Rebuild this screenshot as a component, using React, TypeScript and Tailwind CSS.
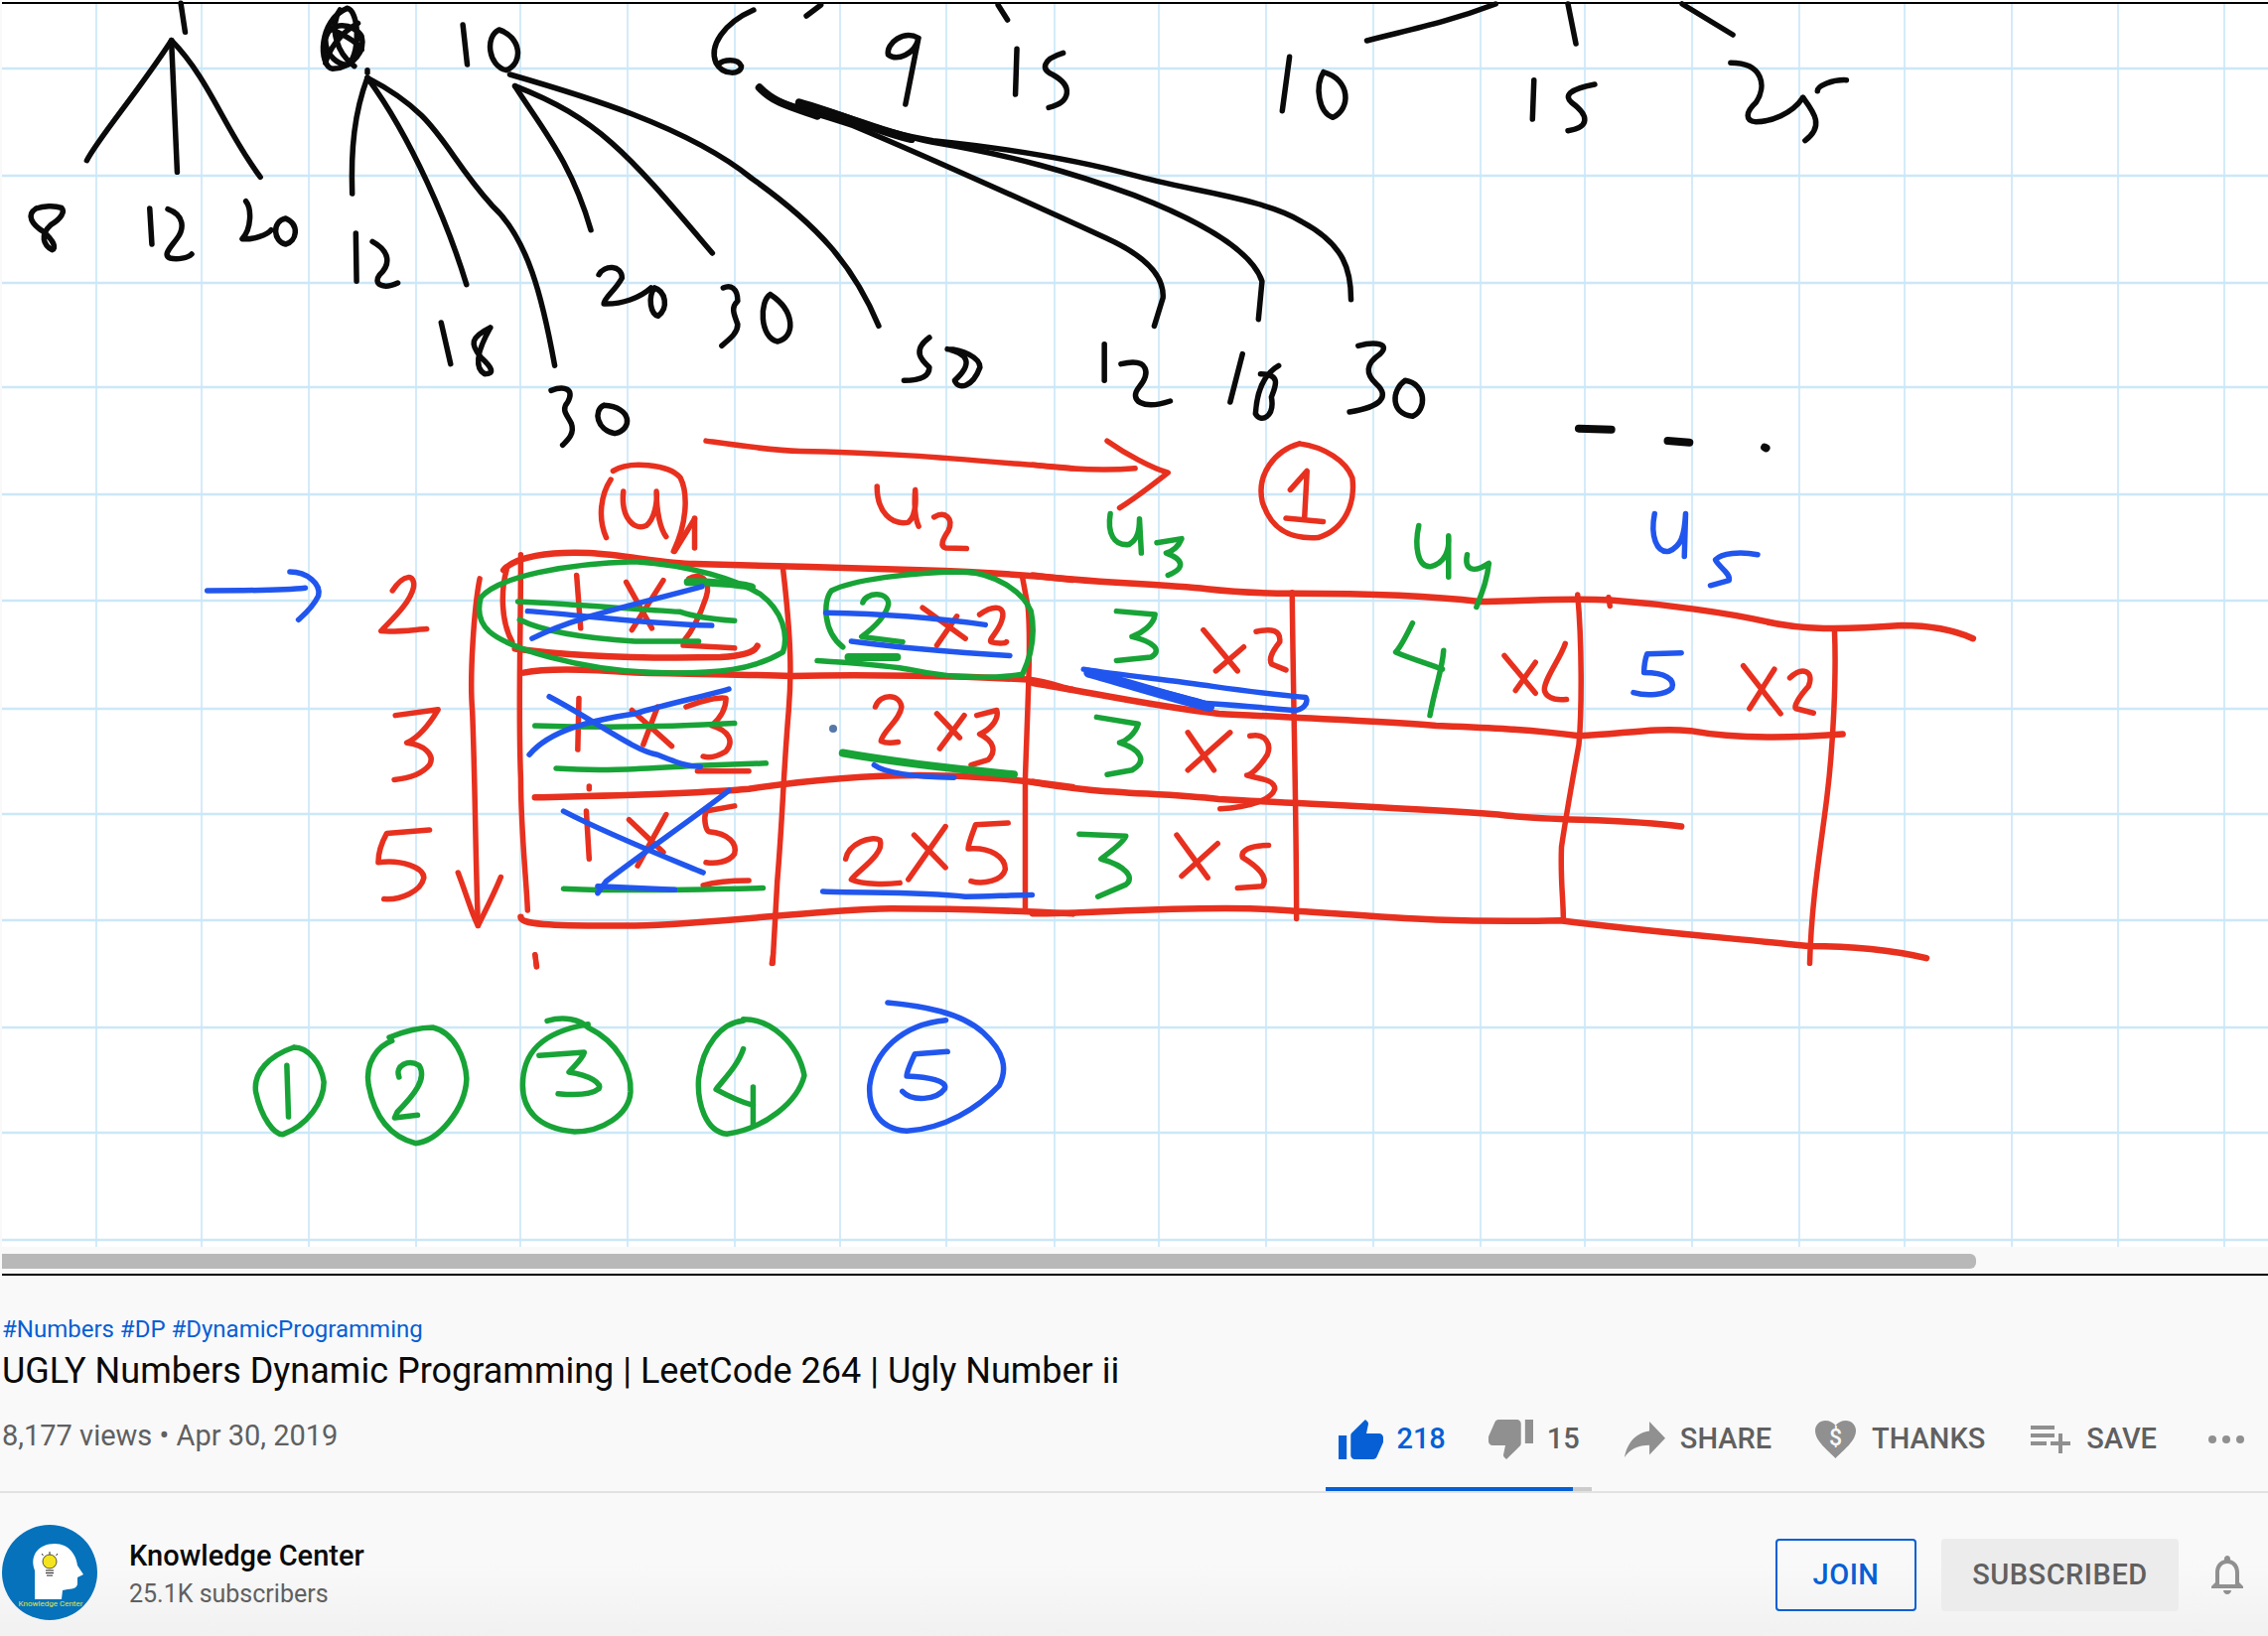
import { FC } from "react";

const RED = "#e8301f";
const GREEN = "#18a337";
const BLUE = "#2156ee";
const BLACK = "#0a0a0a";

const vGrid = [97, 203, 311, 419, 524, 632, 740, 846, 953, 1062, 1167, 1275, 1383, 1491, 1596, 1704, 1812, 1918, 2026, 2133, 2240];
const hGrid = [69, 177, 285, 390, 498, 605, 714, 820, 927, 1035, 1141, 1249];

interface InkProps {
  ox: number;
  oy: number;
  sx: number;
  sy: number;
  color: string;
  width: number;
  lines: string[];
}

// strokes are noted in crop coordinates, the group maps them back on the board
const Ink: FC<InkProps> = ({ ox, oy, sx, sy, color, width, lines }) => (
  <g transform={`translate(${ox} ${oy}) scale(${1 / sx} ${1 / sy})`}>
    {lines.map((d, i) => (
      <path
        key={i}
        d={d}
        fill="none"
        stroke={color}
        strokeWidth={width}
        strokeLinecap="round"
        strokeLinejoin="round"
        vectorEffect="non-scaling-stroke"
      />
    ))}
  </g>
);

const topLeft = { ox: 0, oy: 0, sx: 1.373, sy: 3 };
const topRight = { ox: 1142, oy: 0, sx: 1.373, sy: 3 };
const midLeft = { ox: 180, oy: 440, sx: 1.742, sy: 2.904 };
const midRight = { ox: 1040, oy: 440, sx: 1.6, sy: 2.904 };
const bottom = { ox: 200, oy: 960, sx: 1.823, sy: 3 };

const blackLeft = [
  "M250 10 L256 97",
  "M120 485 C135 420 190 280 237 122",
  "M237 122 L245 520",
  "M237 122 C290 240 310 390 360 535",
  "M480 25 C440 60 440 200 460 208 C490 205 505 150 500 110 C490 70 455 60 450 120 C450 170 470 200 482 195 C500 150 495 30 480 25",
  "M470 30 C455 80 465 160 490 200 M495 70 C470 100 455 150 450 190 M460 90 C480 110 495 130 500 150",
  "M640 75 L646 195",
  "M690 90 C670 110 675 200 700 212 C725 190 720 110 690 90",
  "M508 212 L508 220",
  "M705 225 C800 285 950 380 1040 540 C1130 680 1180 800 1215 985",
  "M712 260 C750 390 790 490 817 695",
  "M712 260 C830 360 870 470 985 765",
  "M508 235 C490 340 485 450 487 585",
  "M508 235 C570 420 620 680 645 860",
  "M508 235 C610 350 610 450 680 620 C730 720 750 900 767 1105",
  "M1042 30 C1000 70 980 140 990 190 C1000 230 1025 225 1025 200 C1020 175 1000 180 993 195",
  "M1135 15 L1115 48",
  "M1380 15 L1393 60",
  "M1270 115 C1250 90 1225 130 1228 165 C1240 185 1265 165 1270 115 L1252 315",
  "M1406 148 L1404 285",
  "M1470 160 C1440 180 1440 210 1455 225 C1485 260 1480 310 1450 325",
  "M1050 265 C1070 310 1110 330 1180 380 C1300 490 1420 610 1530 720 C1580 770 1610 830 1608 900 L1596 985",
  "M1105 310 C1180 350 1220 400 1290 430 C1400 470 1480 520 1568 590 C1650 660 1730 750 1745 850 L1740 965",
  "M1105 310 C1200 375 1240 410 1290 425 C1400 450 1500 490 1568 530 C1640 575 1750 600 1800 670 C1860 740 1868 820 1868 905",
  "M50 630 C35 650 45 680 60 700 C75 730 78 750 72 755 C60 740 55 710 70 680 C85 660 90 640 85 628 C75 620 60 622 50 630",
  "M207 630 L210 738",
  "M232 632 C255 650 255 690 245 720 C235 750 225 770 235 780 C245 785 260 780 265 768",
  "M340 608 C348 630 348 690 335 722 C350 725 370 710 375 695",
  "M395 660 C375 670 378 730 395 738 C410 730 415 680 395 660",
  "M492 705 L493 850",
  "M515 730 C540 760 540 800 525 830 C515 860 530 875 550 855",
  "M610 975 L623 1100",
  "M678 990 C650 1020 650 1040 665 1080 C680 1110 685 1130 670 1130 C655 1110 660 1060 678 990",
  "M762 1180 C780 1165 795 1175 785 1215 C775 1240 785 1255 790 1280 C795 1310 785 1330 778 1345",
  "M835 1225 C820 1240 825 1300 850 1310 C875 1300 875 1230 835 1225",
  "M828 830 C835 800 860 800 860 840 C850 880 835 900 835 918 C860 920 885 900 900 870",
  "M905 870 C895 900 900 950 910 955 C925 930 920 880 905 870",
  "M1000 870 C1010 860 1020 870 1020 910 C1010 930 1015 950 1020 980 C1020 1010 1005 1030 998 1045",
  "M1065 890 C1050 910 1050 1020 1075 1032 C1100 1020 1100 940 1065 890",
  "M1285 1020 C1260 1060 1275 1090 1285 1110 C1285 1140 1270 1150 1250 1150",
  "M1310 1055 C1340 1070 1345 1100 1320 1150 C1325 1180 1345 1170 1355 1110 C1355 1080 1330 1055 1310 1055",
  "M1527 1040 L1527 1150",
  "M1550 1100 C1590 1080 1590 1130 1575 1170 C1560 1210 1580 1240 1618 1212",
];

const blackRight = [
  "M322 123 C380 90 430 70 500 12",
  "M600 12 L611 132",
  "M758 12 L828 105",
  "M215 172 L205 335",
  "M262 218 C250 260 255 340 275 355 C300 330 300 240 262 218",
  "M553 242 L551 360",
  "M637 255 C600 270 595 290 605 310 C630 350 630 385 600 395",
  "M825 190 C870 190 875 260 860 310 C845 340 845 365 860 368 C880 368 910 345 925 295",
  "M985 242 C965 240 945 260 945 275",
  "M925 295 C940 340 955 380 928 425",
  "M150 1070 L133 1215",
  "M200 1105 C180 1130 170 1180 168 1250 C175 1280 195 1260 190 1200 C195 1170 205 1130 175 1130",
  "M310 1045 C335 1030 355 1040 340 1070 C320 1100 320 1130 335 1160 C355 1200 340 1230 298 1245",
  "M375 1150 C355 1180 355 1250 385 1258 C405 1240 405 1160 375 1150",
];

const blackThick = [
  "M1050 265 C1070 310 1090 320 1130 350",
  "M1105 310 C1170 350 1210 395 1260 420",
];

const dashes = ["M615 1295 L660 1298", "M738 1332 L768 1337", "M872 1352 L874 1354"];

const redLeft = [
  "M925 12 C980 25 1040 40 1090 42 C1250 45 1400 70 1568 92",
  "M758 125 C740 170 735 240 750 295",
  "M780 160 C775 240 800 275 820 260 C835 240 840 190 838 160 C838 220 845 270 855 292",
  "M762 100 C790 70 860 80 880 120 C895 170 890 260 868 335",
  "M905 238 L905 325",
  "M870 335 L905 240",
  "M1225 145 C1225 220 1250 260 1280 250 C1295 230 1293 180 1292 155 C1290 200 1292 240 1298 262",
  "M1325 235 C1345 215 1360 240 1350 275 C1340 300 1335 320 1345 325 L1382 327",
  "M375 450 C395 400 415 400 412 440 C405 490 370 540 355 568 C380 572 410 565 435 562",
  "M380 815 L455 798 C440 840 420 880 400 895 C430 900 450 930 440 960 C425 990 400 1000 378 1003",
  "M440 1150 L365 1160 C355 1190 350 1220 350 1245 C390 1235 430 1260 430 1290 C425 1330 390 1355 360 1352",
  "M528 415 C518 500 510 700 515 800 C520 1000 520 1200 525 1430",
  "M490 1275 C505 1340 515 1400 525 1430 C540 1380 555 1330 565 1288",
  "M600 345 C600 600 595 800 600 1000 C600 1150 610 1300 612 1385",
  "M575 390 C565 450 565 540 585 600",
  "M885 610 L975 618",
  "M895 415 C915 395 935 420 925 470 C915 520 900 570 885 600",
  "M698 405 L705 560",
  "M785 425 L830 560",
  "M850 420 L795 565",
  "M1060 385 C1075 600 1075 700 1070 800 C1060 1000 1060 1100 1050 1300 L1042 1540",
  "M1480 410 L1490 500 C1495 600 1490 750 1485 1000 L1485 1380",
  "M625 1515 L628 1550",
  "M702 765 L700 915",
  "M795 800 L865 905",
  "M840 790 L815 900",
  "M890 790 C920 770 950 760 960 765 C960 800 945 830 935 845 C965 860 975 890 960 920 C945 935 930 940 920 935",
  "M910 978 L1000 978",
  "M720 1022 L720 1030",
  "M715 1095 L720 1235",
  "M790 1120 L850 1215",
  "M855 1105 L805 1255",
  "M975 1080 L925 1095 C920 1120 925 1150 930 1155 C965 1160 980 1190 975 1220 C965 1245 940 1250 925 1245",
  "M920 1312 C945 1300 975 1298 1000 1298",
  "M1305 500 L1380 590",
  "M1365 525 L1330 610",
  "M1405 520 C1430 490 1450 495 1445 530 C1440 570 1420 590 1425 600 C1435 605 1450 605 1452 600",
  "M1222 790 C1230 750 1265 750 1268 790 C1265 830 1235 860 1232 890 C1240 897 1255 895 1262 893",
  "M1330 810 L1370 880",
  "M1378 815 L1335 912",
  "M1400 815 L1435 800 C1440 830 1420 860 1405 870 C1430 890 1435 920 1420 945 L1390 960",
  "M1170 1235 C1175 1190 1215 1165 1230 1180 C1240 1220 1190 1270 1180 1295 C1200 1310 1240 1310 1265 1305",
  "M1290 1165 L1345 1260",
  "M1345 1140 L1280 1295",
  "M1455 1130 L1398 1135 C1390 1170 1385 1190 1385 1205 C1425 1200 1450 1230 1450 1265 C1445 1300 1410 1310 1390 1300",
];

// the ruled rows of the table are heavier than the columns and the writing
const redRowsLeft = [
  "M570 390 C590 350 650 335 720 340 C780 345 850 370 905 372 C1000 375 1200 385 1300 390 C1400 395 1500 405 1568 418",
  "M590 620 C680 640 800 650 950 645 C990 640 1010 630 1015 612",
  "M605 690 C650 675 720 680 800 690 C900 695 1000 695 1075 700 C1200 695 1380 700 1490 710 C1530 720 1550 735 1568 740",
  "M625 1055 C750 1050 900 1045 1000 1030 C1100 1005 1200 990 1300 990 C1400 990 1480 1005 1568 1025",
  "M600 1405 C600 1425 640 1432 800 1430 C950 1425 1100 1385 1250 1380 C1350 1380 1450 1385 1568 1395",
];

const redRowsRight = [
  "M0 405 C80 425 200 430 280 445 C330 455 380 458 420 458 C500 458 620 460 720 482 C790 482 860 470 930 478 C1020 490 1120 515 1180 540 C1240 565 1300 565 1400 552 C1450 552 1490 570 1515 590",
  "M0 720 C100 750 200 790 300 810 C400 820 550 830 650 845 C720 850 800 855 880 875 C950 870 1000 850 1060 860 C1120 880 1200 885 1305 870",
  "M0 1010 C100 1045 200 1040 300 1060 C450 1075 600 1085 750 1105 C830 1125 950 1115 1045 1140",
  "M0 1395 C100 1395 200 1375 350 1380 C500 1390 620 1425 850 1415 C1000 1450 1150 1470 1250 1490 C1320 1490 1380 1500 1440 1525",
];

const redRight = [
  "M0 82 C60 95 120 100 165 92",
  "M120 12 C150 50 190 90 218 105 C190 145 165 180 140 208",
  "M430 20 C390 40 360 110 370 190 C385 280 420 300 460 295 C505 270 520 190 515 120 C505 70 470 30 430 20",
  "M415 155 L442 100 L438 235",
  "M408 238 L468 248",
  "M418 455 C420 800 425 1100 425 1410",
  "M878 462 C885 600 885 800 880 900 C870 1000 860 1100 852 1200 C850 1300 855 1350 855 1415",
  "M1292 570 C1295 700 1290 900 1280 1050 C1270 1200 1255 1350 1252 1540",
  "M928 470 L930 495",
  "M275 565 L330 685",
  "M340 615 L295 685",
  "M360 570 C385 560 400 565 398 600 C385 630 380 650 385 665 L408 682",
  "M760 640 L810 750",
  "M810 660 L778 742",
  "M858 605 C850 650 820 720 825 745 C830 770 850 770 860 768",
  "M1145 670 L1205 810",
  "M1195 680 L1155 795",
  "M1220 705 C1240 670 1260 685 1250 730 C1235 760 1225 790 1230 795 L1258 808",
  "M250 865 L292 975",
  "M318 865 L250 975",
  "M350 875 C375 865 385 900 378 930 C365 970 350 990 345 990 C360 1000 390 1000 390 1030 C385 1060 350 1085 302 1088",
  "M232 1165 L282 1290",
  "M298 1190 L240 1285",
  "M380 1195 C350 1195 335 1210 338 1230 C365 1260 380 1290 370 1315 L330 1320",
];

const greenLeft = [
  "M530 470 C560 410 680 370 800 365 C900 375 980 420 1020 460 C1060 510 1070 580 1060 630 C1010 680 950 695 830 690 C700 680 580 620 545 570 C525 540 525 500 530 470",
  "M595 482 C700 490 800 505 880 512 C910 530 950 535 975 538",
  "M598 535 C640 570 720 590 800 598 L912 598",
  "M893 425 C930 425 990 430 1005 440",
  "M625 845 C720 850 850 850 975 838",
  "M662 970 C750 980 820 970 910 962 L1030 955",
  "M675 1322 C750 1330 900 1325 1025 1320",
  "M1165 615 C1130 570 1130 480 1145 450 C1180 420 1280 395 1380 395 C1430 400 1480 450 1495 510 C1505 590 1490 660 1480 695 C1420 710 1350 705 1280 680 C1220 665 1170 660 1120 655",
  "M1200 485 C1205 455 1245 450 1245 490 C1240 530 1210 570 1198 585 L1270 600",
];

const greenThick = [
  "M1175 645 L1260 645",
  "M1165 925 C1250 950 1350 970 1465 988",
  "M893 425 C930 425 990 430 1005 440",
];

const greenRight = [
  "M125 225 C120 280 130 320 155 315 C170 300 172 270 172 240 L175 340",
  "M200 310 L240 298 C235 320 225 335 215 340 C245 360 245 385 218 405",
  "M622 260 C615 320 620 380 640 380 C665 370 672 330 670 290 L670 410",
  "M700 345 C695 390 710 400 735 370 C732 420 725 450 715 498",
  "M135 510 L197 520 C195 550 175 575 160 585 C195 600 210 625 190 645 L135 655",
  "M612 545 C600 590 590 620 585 630 C610 650 640 665 660 680",
  "M662 625 C660 680 650 720 640 815",
  "M103 820 L170 840 C165 870 150 890 140 895 C175 915 185 950 160 975 L120 988",
  "M75 1162 L150 1168 C145 1190 120 1220 110 1235 C150 1255 165 1290 150 1310 L105 1345",
];

const greenBottom = [
  "M175 285 C130 310 100 360 105 420 C115 500 140 550 155 548 C200 520 230 450 230 390 C225 330 200 285 175 285",
  "M162 340 L165 495",
  "M350 255 C380 235 410 225 430 225 C470 240 490 320 492 380 C490 470 440 570 398 575 C340 550 320 470 312 400 C305 330 330 280 355 265",
  "M368 375 C360 340 385 320 405 340 C420 380 395 430 365 480 L360 498 L402 490",
  "M640 205 C670 190 700 200 715 225 C770 270 795 350 793 420 C790 490 740 540 690 540 C620 530 595 470 595 400 C595 300 630 240 715 215",
  "M625 310 L708 300 C705 320 690 340 680 360 C720 370 740 395 735 410 C720 430 690 430 660 425",
  "M1000 200 C1050 200 1100 270 1112 370 C1100 450 1040 530 970 547 C930 540 915 450 918 380 C925 280 960 210 1000 205",
  "M1000 290 C990 340 965 380 950 412 C970 430 995 450 1018 460",
  "M1018 405 L1018 520",
];

const blueLeft = [
  "M50 450 C100 450 180 450 222 442",
  "M195 395 C225 395 250 430 245 465 C235 500 220 520 210 535",
  "M612 510 C700 520 800 545 935 552",
  "M620 590 C690 530 780 500 918 438",
  "M1135 515 C1230 518 1330 530 1415 550",
  "M1180 598 C1280 620 1360 630 1458 640",
  "M650 760 C730 830 800 920 840 930 C870 950 890 965 915 965",
  "M615 930 C650 860 720 830 800 810 C860 780 920 760 965 738",
  "M675 1095 C750 1160 840 1220 920 1275",
  "M965 1035 C900 1120 820 1210 750 1300 L735 1335",
  "M735 1315 L870 1325",
  "M1220 960 C1240 985 1300 995 1360 997",
  "M1130 1330 C1200 1335 1300 1330 1380 1345 C1420 1345 1460 1340 1497 1340",
];

const blueRight = [
  "M82 680 C150 700 220 710 290 730 C350 745 390 755 440 762 C445 780 435 800 420 800 C360 790 320 785 280 780 C220 750 150 720 90 690",
  "M1002 225 C995 290 1005 340 1025 335 C1045 320 1050 290 1052 225 L1050 350",
  "M1168 345 C1140 335 1110 340 1100 360 C1105 380 1125 400 1122 420 L1092 435",
  "M1045 632 L990 635 C985 660 985 680 985 690 C1020 690 1035 710 1030 735 C1020 755 990 760 968 748",
];

const blueBottom = [
  "M1265 150 C1330 160 1400 180 1440 240 C1480 300 1485 350 1470 400 C1430 470 1370 530 1300 538 C1240 530 1230 450 1232 400 C1240 300 1290 215 1372 203",
  "M1375 298 L1315 305 C1305 340 1300 365 1300 372 C1340 375 1375 385 1370 410 C1355 445 1310 450 1292 418",
];

const Board = () => (
  <svg width="2284" height="1256" viewBox="0 0 2284 1256" className="block shrink-0">
    <rect x="2" y="0" width="2282" height="1256" fill="#ffffff" />
    <rect x="0" y="0" width="2" height="1256" fill="#f9f9f9" />
    {vGrid.map(x => (
      <line key={x} x1={x} y1="3" x2={x} y2="1256" stroke="#c4e5f7" strokeWidth="1.5" />
    ))}
    {hGrid.map(y => (
      <line key={y} x1="2" y1={y} x2="2284" y2={y} stroke="#cbe8f8" strokeWidth="2.5" />
    ))}
    <rect x="2" y="2" width="2282" height="2" fill="#000000" />
    <Ink {...topLeft} color={BLACK} width={5.5} lines={blackLeft} />
    <Ink {...topLeft} color={BLACK} width={8} lines={blackThick} />
    <Ink {...topRight} color={BLACK} width={5.5} lines={blackRight} />
    <Ink {...topRight} color={BLACK} width={8} lines={dashes} />
    <Ink {...midLeft} color={RED} width={5.5} lines={redLeft} />
    <Ink {...midRight} color={RED} width={5.5} lines={redRight} />
    <Ink {...midLeft} color={RED} width={6.5} lines={redRowsLeft} />
    <Ink {...midRight} color={RED} width={6.5} lines={redRowsRight} />
    <Ink {...midLeft} color={GREEN} width={5.5} lines={greenLeft} />
    <Ink {...midLeft} color={GREEN} width={8} lines={greenThick} />
    <Ink {...midRight} color={GREEN} width={5.5} lines={greenRight} />
    <Ink {...bottom} color={GREEN} width={5.5} lines={greenBottom} />
    <Ink {...bottom} color={RED} width={5} lines={["M618 5 L620 42", "M1055 0 L1052 32"]} />
    <Ink {...midLeft} color={BLUE} width={5.5} lines={blueLeft} />
    <Ink {...midRight} color={BLUE} width={5.5} lines={blueRight} />
    <Ink {...midRight} color={BLUE} width={10} lines={["M90 690 C150 720 220 760 285 790"]} />
    <Ink {...bottom} color={BLUE} width={5.5} lines={blueBottom} />
    <circle cx="839" cy="734" r="4" fill="#5777a8" />
  </svg>
);

const Avatar = () => (
  <svg width="96" height="96" viewBox="2 6 96 96" className="shrink-0">
    <circle cx="50" cy="54" r="48" fill="#0572bb" />
    <path
      d="M35 81 L35 52 C29 36 40 25 55 25 C70 25 77 37 78 47 L84 56 L78 59 L78 66 C76 72 70 70 63 72 L62 81 Z"
      fill="#ffffff"
    />
    <circle cx="50" cy="43" r="7" fill="#f4e420" stroke="#2b2b1a" strokeWidth="0.8" />
    <path d="M46 52 H54 M46 54.500 H54 M47 57 H53" stroke="#222222" strokeWidth="1.2" />
    <path d="M42 35 L43.500 37 M50 33 V36 M58 35 L56.500 37" stroke="#333333" strokeWidth="1" />
    <text
      x="51"
      y="88"
      textAnchor="middle"
      fontSize="8"
      fill="#e6e43a"
      fontFamily="Roboto, sans-serif"
    >
      Knowledge Center
    </text>
  </svg>
);

const ThumbUp = () => (
  <svg width="45" height="40" viewBox="1 1 22 20" preserveAspectRatio="none">
    <path
      fill="#065fd4"
      d="M1 21h4V9H1v12zm22-11c0-1.100-.9-2-2-2h-6.310l.95-4.570.03-.32c0-.41-.17-.79-.44-1.060L14.170 1 7.590 7.590C7.220 7.950 7 8.450 7 9v10c0 1.100.9 2 2 2h9c.83 0 1.540-.5 1.840-1.220l3.020-7.050c.09-.23.14-.47.14-.73v-2z"
    />
  </svg>
);

const ThumbDown = () => (
  <svg width="45" height="40" viewBox="1 3 22 20" preserveAspectRatio="none">
    <path
      fill="#909090"
      d="M15 3H6c-.83 0-1.540.5-1.840 1.220l-3.020 7.050c-.09.23-.14.47-.14.73v2c0 1.100.9 2 2 2h6.310l-.95 4.570-.03.32c0 .41.17.79.44 1.060L9.830 23l6.590-6.590c.36-.36.58-.86.58-1.410V5c0-1.100-.9-2-2-2zm4 0v12h4V3h-4z"
    />
  </svg>
);

const ShareIcon = () => (
  <svg width="41" height="36" viewBox="3 5 18 15" preserveAspectRatio="none">
    <path fill="#909090" d="M14 9V5l7 7-7 7v-4.100c-5 0-8.500 1.600-11 5.100 1-5 4-10 11-11z" />
  </svg>
);

const ThanksIcon = () => (
  <svg width="41" height="38" viewBox="0 0 41 38">
    <path
      fill="#909090"
      d="M20.500 38 C13 30 0 21 0 10 C0 4 5 0 10 0 C14.500 0 18.500 2 20.500 5 C22.500 2 26.500 0 31 0 C36 0 41 4 41 10 C41 21 28 30 20.500 38 Z"
    />
    <text
      x="20.500"
      y="25"
      textAnchor="middle"
      fontSize="23"
      fontWeight="500"
      fill="#f9f9f9"
      fontFamily="Roboto, sans-serif"
    >
      $
    </text>
  </svg>
);

const SaveIcon = () => (
  <svg width="40" height="28" viewBox="2 6 20 14" preserveAspectRatio="none">
    <path
      fill="#909090"
      d="M14 10H2v2h12v-2zm0-4H2v2h12V6zm4 8v-4h-2v4h-4v2h4v4h2v-4h4v-2h-4zM2 16h8v-2H2v2z"
    />
  </svg>
);

const BellIcon = () => (
  <svg width="32" height="39" viewBox="4 2.500 16 19.500" preserveAspectRatio="none">
    <path
      fill="#909090"
      d="M12 22c1.100 0 2-.9 2-2h-4c0 1.100.89 2 2 2zm6-6v-5c0-3.070-1.640-5.640-4.500-6.320V4c0-.83-.67-1.500-1.500-1.500s-1.500.67-1.500 1.500v.68C7.630 5.360 6 7.920 6 11v5l-2 2v1h16v-1l-2-2zm-2 1H8v-6c0-2.480 1.510-4.500 4-4.500s4 2.020 4 4.500v6z"
    />
  </svg>
);

const App = () => (
  <div className="flex h-[1648px] w-[2284px] flex-col overflow-hidden bg-[#f9f9f9] font-['Roboto',sans-serif]">
    <Board />
    <div className="mt-[7px] ml-[2px] h-[15px] w-[1988px] shrink-0 rounded-r-[6px] bg-[#b8b8b8]" />
    <div className="mt-[5px] ml-[2px] h-[2px] shrink-0 bg-black" />

    <div className="flex flex-col pl-[2px]">
      <div className="mt-[40px] text-[24px] leading-[28px] text-[#065fd4]">
        #Numbers #DP #DynamicProgramming
      </div>
      <div className="mt-[6px] text-[36px] leading-[44px] text-[#0a0a0a]">
        UGLY Numbers Dynamic Programming | LeetCode 264 | Ugly Number ii
      </div>
    </div>

    <div className="relative mt-[25px] flex h-[74px] shrink-0 items-start pl-[2px]">
      <div className="text-[29px] leading-[36px] text-[#606060]">8,177 views • Apr 30, 2019</div>
      <div className="ml-auto flex items-center pr-[24px] text-[29px] font-medium text-[#606060]">
        <ThumbUp />
        <span className="ml-[13px] text-[#065fd4]">218</span>
        <span className="ml-[43px]"><ThumbDown /></span>
        <span className="ml-[14px]">15</span>
        <span className="ml-[45px]"><ShareIcon /></span>
        <span className="ml-[15px]">SHARE</span>
        <span className="ml-[44px]"><ThanksIcon /></span>
        <span className="ml-[16px]">THANKS</span>
        <span className="ml-[46px]"><SaveIcon /></span>
        <span className="ml-[16px]">SAVE</span>
        <span className="ml-[52px] flex gap-[6px]">
          <i className="block size-[8px] rounded-full bg-[#909090]" />
          <i className="block size-[8px] rounded-full bg-[#909090]" />
          <i className="block size-[8px] rounded-full bg-[#909090]" />
        </span>
      </div>
      <div className="absolute bottom-0 left-[1335px] flex h-[4px] w-[268px]">
        <div className="h-full w-[249px] bg-[#065fd4]" />
        <div className="h-full flex-1 bg-[#cccccc]" />
      </div>
    </div>
    <div className="h-[2px] shrink-0 bg-[#e2e2e2]" />

    <div className="flex flex-1 items-start bg-gradient-to-b from-[#f9f9f9] from-50% to-[#f1f1f1] pt-[32px] pl-[2px]">
      <Avatar />
      <div className="ml-[32px] flex flex-col pt-[13px]">
        <div className="text-[29px] leading-[36px] font-medium text-[#0a0a0a]">Knowledge Center</div>
        <div className="mt-[5px] text-[25px] leading-[32px] text-[#606060]">25.1K subscribers</div>
      </div>
      <div className="mt-[14px] ml-auto flex items-center pr-[25px]">
        <div className="flex h-[73px] w-[142px] items-center justify-center rounded-[4px] border-2 border-[#065fd4] text-[29px] font-medium tracking-[0.5px] text-[#065fd4]">
          JOIN
        </div>
        <div className="ml-[25px] flex h-[73px] w-[239px] items-center justify-center rounded-[4px] bg-[#ececec] text-[29px] font-medium tracking-[0.5px] text-[#606060]">
          SUBSCRIBED
        </div>
        <span className="ml-[33px]"><BellIcon /></span>
      </div>
    </div>
  </div>
);

export default App;
